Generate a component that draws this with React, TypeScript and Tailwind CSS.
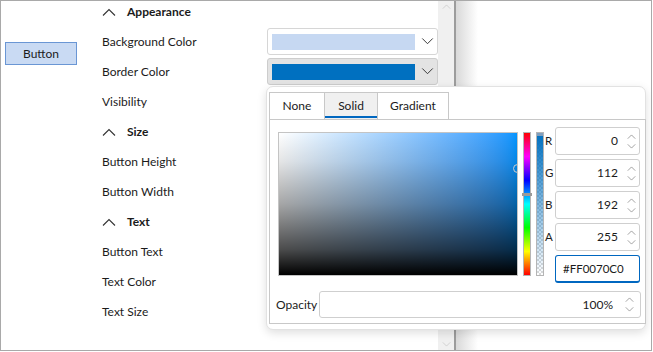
import React from 'react';

const Chevron = ({ up = false, className = '' }: { up?: boolean; className?: string }) => (
    <svg viewBox="0 0 14 8" className={className} fill="none" stroke="currentColor" strokeWidth="1.1">
        {up ? <path d="M1 7.5 L7 1.5 L13 7.5" /> : <path d="M1 0.5 L7 6.5 L13 0.5" />}
    </svg>
);

const Spinner = () => (
    <div className="flex flex-col items-center gap-[5px] text-[#7a7a7a]">
        <Chevron up className="w-[9px] h-[5px]" />
        <Chevron className="w-[9px] h-[5px]" />
    </div>
);

const Header = ({ title }: { title: string }) => (
    <div className="h-[30px] flex items-center">
        <Chevron up className="w-[14px] h-[8px] text-[#333]" />
        <span className="ml-[11px] font-bold">{title}</span>
    </div>
);

const Row = ({ label, children }: { label: string; children?: React.ReactNode }) => (
    <div className="h-[30px] flex items-center">
        <span className="w-[165px] shrink-0">{label}</span>
        {children}
    </div>
);

const ColorCombo = ({ color, pressed = false }: { color: string; pressed?: boolean }) => (
    <div className={`w-[171px] h-[27px] -mt-[1px] rounded-[3px] border flex items-center pl-[4px] ${pressed ? 'bg-[#e3e3e3] border-[#cdcdcd]' : 'bg-white border-[#d6d6d6]'}`}>
        <div className="w-[143px] h-[16px]" style={{ backgroundColor: color }} />
        <Chevron className="ml-[6px] w-[13px] h-[7px] text-[#333]" />
    </div>
);

const NumberBox = ({ label, value }: { label: string; value: string }) => (
    <div className="flex items-center h-[28px]">
        <span className="w-[10px] text-[11.5px]">{label}</span>
        <div className="w-[85px] h-[28px] border border-[#cfcfcf] rounded-[3px] flex items-center justify-end pr-[3px]">
            <span className="mr-[9px]">{value}</span>
            <Spinner />
        </div>
    </div>
);

export default function App() {
    const tabs = ['None', 'Solid', 'Gradient'];
    const widths = ['w-[56px]', 'w-[53px]', 'w-[71px]'];

    return (
        <div className="w-[653px] h-[352px] bg-white overflow-hidden font-['Lato',sans-serif] text-[12px] text-[#1b1b1b]">
            <div className="relative w-[652px] h-[351px] border border-[#a9a9a9] flex">
                {/* designer surface */}
                <div className="w-[94px] shrink-0 pt-[41px] pl-[4px]">
                    <div className="w-[72px] h-[23px] flex items-center justify-center bg-[#c9daf3] border border-[#6a96d4]">
                        Button
                    </div>
                </div>

                {/* property grid */}
                <div className="w-[343px] shrink-0 pl-[7px] -mt-[4px]">
                    <Header title="Appearance" />
                    <Row label="Background Color">
                        <ColorCombo color="#c6d8f2" />
                    </Row>
                    <Row label="Border Color">
                        <ColorCombo color="#0070c0" pressed />
                    </Row>
                    <Row label="Visibility" />
                    <Header title="Size" />
                    <Row label="Button Height" />
                    <Row label="Button Width" />
                    <Header title="Text" />
                    <Row label="Button Text" />
                    <Row label="Text Color" />
                    <Row label="Text Size" />
                </div>

                {/* scrollbar */}
                <div className="w-[16px] shrink-0 bg-[#f0f0f0] flex flex-col items-center justify-between py-[3px] text-[#c4c4c4]">
                    <Chevron up className="w-[9px] h-[5px]" />
                    <Chevron className="w-[9px] h-[5px]" />
                </div>
                <div className="w-[2px] shrink-0 bg-[#9c9c9c]" />
                <div className="w-[22px] shrink-0 bg-linear-to-r from-[#d9d9d9] to-white" />
                <div className="flex-1" />

                {/* colour picker popup */}
                <div className="absolute left-[265px] top-[85px] w-[380px] h-[244px] bg-white border border-[#e2e2e2] rounded-[7px] shadow-[0_3px_10px_rgba(0,0,0,0.13)] pt-[5px] pl-[2px]">
                    <div className="flex h-[27px]">
                        {tabs.map((t, i) => (
                            <div
                                key={t}
                                className={`${widths[i]} relative flex items-center justify-center border-t border-r border-[#c8c8c8] ${i === 0 ? 'border-l' : ''} ${i === 1 ? 'bg-[#f0f0f0]' : 'bg-white'}`}
                            >
                                {t}
                                {i === 1 && <div className="absolute left-0 right-0 bottom-[1px] h-[2px] bg-[#0067c0]" />}
                            </div>
                        ))}
                    </div>
                    <div className="w-[377px] h-[205px] border border-[#c8c8c8] pt-[7px] pl-[8px]">
                        <div className="flex items-start">
                            <div className="mt-[5px] flex h-[144px]">
                                <div className="relative w-[240px] h-[144px] border border-[#c4c4c4] overflow-hidden bg-linear-to-r from-white to-[#0095ff]">
                                    <div className="absolute inset-0 bg-[linear-gradient(to_top,#000,rgba(0,0,0,0.7)_18%,rgba(0,0,0,0.35)_50%,rgba(0,0,0,0.1)_80%,transparent)]" />
                                    <div className="absolute right-[-5px] top-[31px] w-[9px] h-[9px] rounded-full border border-[#d0d0d0]" />
                                </div>
                                <div className="relative ml-[5px] w-[8px] h-[144px] border border-[#b5b5b5] bg-[linear-gradient(to_bottom,#f00,#f0f,#00f,#0ff,#0f0,#ff0,#f00)]">
                                    <div className="absolute left-[-2px] top-[60px] w-[10px] h-[3px] bg-[#9a9a9a]" />
                                </div>
                                <div className="relative ml-[5px] w-[8px] h-[144px] border border-[#b5b5b5] bg-[repeating-conic-gradient(#d9d9d9_0_25%,#ffffff_0_50%)] bg-[length:4px_4px]">
                                    <div className="absolute inset-0 bg-linear-to-b from-[#0070c0] to-transparent" />
                                    <div className="absolute left-0 right-0 top-0 h-[3px] bg-[#7f9fbf]" />
                                </div>
                            </div>
                            <div className="ml-[1px] flex flex-col gap-[4px]">
                                <NumberBox label="R" value="0" />
                                <NumberBox label="G" value="112" />
                                <NumberBox label="B" value="192" />
                                <NumberBox label="A" value="255" />
                                <div className="flex h-[28px]">
                                    <span className="w-[10px]" />
                                    <div className="w-[85px] h-[28px] border border-[#0067c0] border-b-2 rounded-[3px] flex items-center pl-[7px] text-[11.5px]">
                                        #FF0070C0
                                    </div>
                                </div>
                            </div>
                        </div>
                        <div className="mt-[8px] -ml-[2px] flex items-center">
                            <span className="w-[43px]">Opacity</span>
                            <div className="w-[322px] h-[27px] border border-[#cfcfcf] rounded-[3px] flex items-center justify-end pr-[6px]">
                                <span className="mr-[12px]">100%</span>
                                <Spinner />
                            </div>
                        </div>
                    </div>
                </div>
            </div>
        </div>
    );
}
